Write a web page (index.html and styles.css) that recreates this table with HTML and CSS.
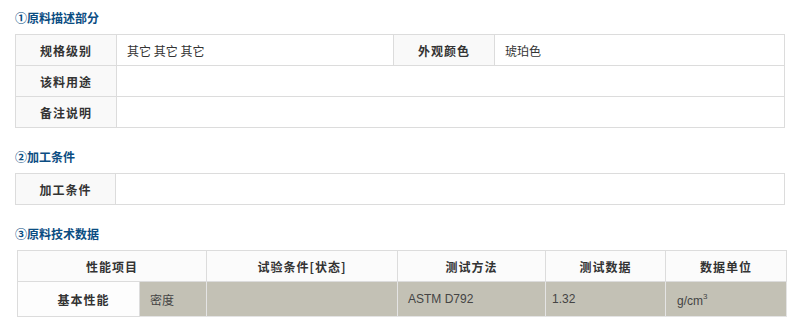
FILE: index.html
```html
<!DOCTYPE html>
<html lang="zh">
<head>
<meta charset="utf-8">
<title>原料</title>
<link rel="stylesheet" href="styles.css">
</head>
<body>
<div class="page">
  <section class="sec sec-1">
    <h3 class="title">①原料描述部分</h3>
    <div class="grid g1">
      <div class="cell label">规格级别</div>
      <div class="cell val">其它 其它 其它</div>
      <div class="cell label">外观颜色</div>
      <div class="cell val">琥珀色</div>
      <div class="cell label">该料用途</div>
      <div class="cell val span3"></div>
      <div class="cell label">备注说明</div>
      <div class="cell val span3"></div>
    </div>
  </section>
  <section class="sec sec-2">
    <h3 class="title">②加工条件</h3>
    <div class="grid g2">
      <div class="cell label">加工条件</div>
      <div class="cell val"></div>
    </div>
  </section>
  <section class="sec sec-3">
    <h3 class="title">③原料技术数据</h3>
    <div class="grid g3">
      <div class="cell head span2">性能项目</div>
      <div class="cell head">试验条件[状态]</div>
      <div class="cell head">测试方法</div>
      <div class="cell head">测试数据</div>
      <div class="cell head">数据单位</div>
      <div class="cell cat">基本性能</div>
      <div class="cell data">密度</div>
      <div class="cell data"></div>
      <div class="cell data latin">ASTM D792</div>
      <div class="cell data latin tight">1.32</div>
      <div class="cell data latin unit"><span>g/cm<sup class="pow">3</sup></span></div>
    </div>
  </section>
</div>
</body>
</html>
```

FILE: styles.css
```css
* { box-sizing: border-box; }
html, body { margin: 0; padding: 0; background: #fff; }
body {
  font-family: "Noto Sans CJK SC", "Liberation Sans", sans-serif;
  font-size: 12px;
  color: #333;
}
.page { padding: 8px 0 0 15px; }
.sec-2, .sec-3 { margin-top: 19px; }
.title {
  margin: 0 0 4px 0;
  height: 22px;
  line-height: 20px;
  font-size: 12px;
  font-weight: bold;
  color: #0b4d82;
}
.grid {
  display: grid;
  width: 770px;
  border-top: 1px solid #dcdcdc;
  border-left: 1px solid #dcdcdc;
}
.g1 { grid-template-columns: 101px 277px 101px 290px; grid-auto-rows: 31px; }
.g2 { grid-template-columns: 100px 669px; grid-auto-rows: 31px; }
.g3 {
  margin-left: 2px;
  grid-template-columns: 122px 67px 191px 148px 120px 121px;
  grid-template-rows: 31px 35px;
}
.cell {
  border-right: 1px solid #dcdcdc;
  border-bottom: 1px solid #dcdcdc;
  display: flex;
  align-items: center;
  padding: 0 10px;
  white-space: nowrap;
}
.span3 { grid-column: span 3; }
.span2 { grid-column: span 2; }
.label {
  background: #f9f9f9;
  justify-content: center;
  font-weight: bold;
  letter-spacing: 1px;
  padding: 0;
}
.val { background: #fff; }
.head {
  background: #fbfbfb;
  justify-content: center;
  font-weight: bold;
  letter-spacing: 1px;
}
.cat {
  background: #fdfdfd;
  justify-content: center;
  font-weight: bold;
  letter-spacing: 1px;
  padding-left: 20px;
}
.data {
  background: #c3c1b5;
  border-color: #e4e4e4;
  color: #444;
}
.latin { font-family: "Liberation Sans", sans-serif; font-size: 12px; }
.tight { padding-left: 6px; }
.unit { padding-left: 11px; padding-top: 4px; }
.pow {
  font-size: 8px;
  position: relative;
  top: -1px;
  vertical-align: super;
  line-height: 0;
}
```
